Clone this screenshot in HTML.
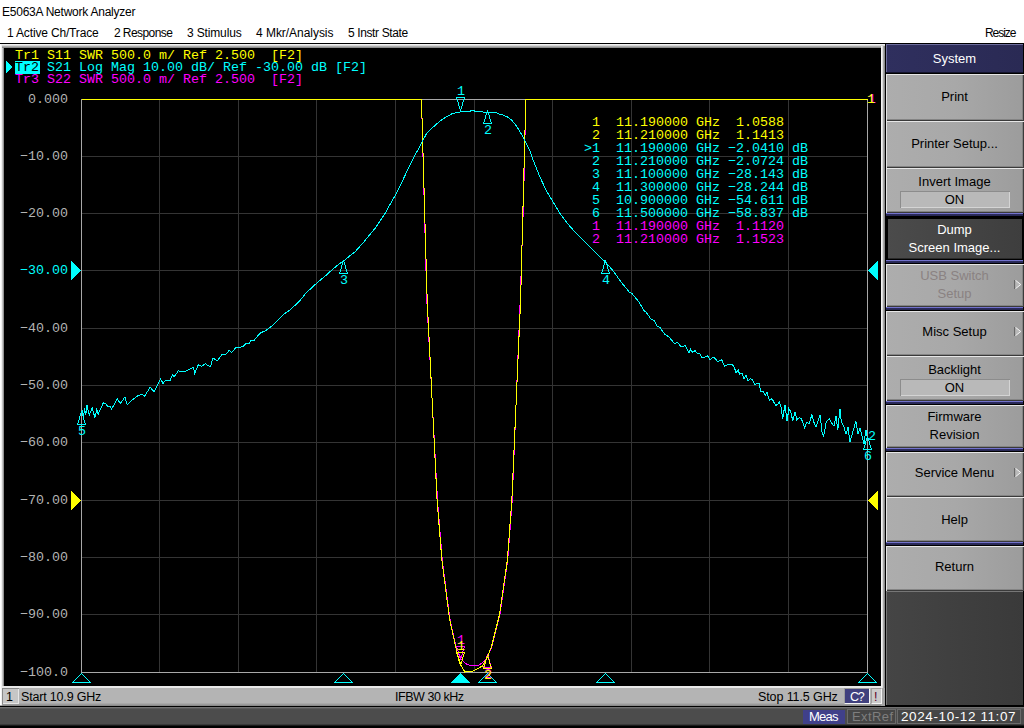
<!DOCTYPE html>
<html><head><meta charset="utf-8"><title>E5063A Network Analyzer</title>
<style>
html,body{margin:0;padding:0}
body{width:1024px;height:728px;position:relative;overflow:hidden;background:#fff;font-family:"Liberation Sans",sans-serif}
div{position:absolute;box-sizing:border-box}
.m{font-family:"Liberation Mono",monospace;font-size:13.33px;line-height:13px;height:13px;white-space:pre;letter-spacing:0}
.s{left:886px;width:137px;text-align:center;font-size:13px;line-height:17px;height:17px;white-space:nowrap}
.t{font-size:12px;line-height:14px;white-space:nowrap;color:#000}
.b{font-size:13px;line-height:15px;white-space:nowrap}
.c{font-size:12.5px;line-height:15px;white-space:nowrap}
</style></head><body>
<div class="t" style="left:2px;top:5px;letter-spacing:-0.24px">E5063A Network Analyzer</div>
<div class="t" style="left:7px;top:26px;letter-spacing:-0.16px">1 Active Ch/Trace</div>
<div class="t" style="left:114px;top:26px;letter-spacing:-0.58px">2 Response</div>
<div class="t" style="left:187px;top:26px;letter-spacing:-0.15px">3 Stimulus</div>
<div class="t" style="left:256px;top:26px;letter-spacing:-0.04px">4 Mkr/Analysis</div>
<div class="t" style="left:348px;top:26px;letter-spacing:-0.38px">5 Instr State</div>
<div class="t" style="left:985px;top:26px;letter-spacing:-1.05px">Resize</div>
<div style="left:0;top:43px;width:1024px;height:1px;background:#000"></div>
<!-- plot frame -->
<div style="left:0;top:44px;width:885px;height:662px;background:#a8a8a8"></div>
<div style="left:0;top:44px;width:4px;height:661px;background:linear-gradient(90deg,#ffffff 0px,#ffffff 1px,#f0f0f0 1px,#f0f0f0 2px,#c4c4c4 2px,#c4c4c4 3px,#929292 3px,#929292 4px)"></div>
<div style="left:2px;top:44px;width:883px;height:4px;background:linear-gradient(180deg,#f0f0f0 0px,#f0f0f0 1px,#d6d6d6 1px,#d6d6d6 2px,#adadad 2px,#adadad 3px,#8e8e8e 3px,#8e8e8e 4px)"></div>
<div style="left:881px;top:46px;width:4px;height:642px;background:linear-gradient(90deg,#f4f4f4 0px,#f4f4f4 1px,#dcdcdc 1px,#dcdcdc 2px,#a8a8a8 2px,#a8a8a8 3px,#8c8c8c 3px,#8c8c8c 4px)"></div>
<div style="left:881px;top:688px;width:4px;height:18px;background:#a4a4a4"></div>
<div style="left:4px;top:48px;width:877px;height:638px;background:#000"></div>
<!-- channel status bar -->
<div style="left:2px;top:686px;width:879px;height:20px;background:linear-gradient(180deg,#b4b4b4 0,#b4b4b4 17px,#a8a8a8 17px,#a8a8a8 18px,#9a9a9a 18px,#9a9a9a 19px,#8a8a8a 19px)"></div>
<div style="left:2px;top:686px;width:879px;height:2px;background:#e8e8e8"></div>
<div style="left:2px;top:688px;width:17px;height:16px;background:#c6c6c6;box-shadow:inset 1px 1px 0 #8a8a8a, inset -1px -1px 0 #e6e6e6"></div>
<div class="c" style="left:6px;top:690px;color:#000">1</div>
<div class="c" style="left:21px;top:690px;color:#000;letter-spacing:-0.18px">Start 10.9 GHz</div>
<div class="c" style="left:395px;top:690px;color:#000;letter-spacing:-0.45px">IFBW 30 kHz</div>
<div class="c" style="left:758px;top:690px;color:#000;letter-spacing:-0.1px">Stop 11.5 GHz</div>
<div style="left:844px;top:688px;width:26px;height:16px;background:#40407e;border:1px solid;border-color:#9c9c9c #f4f4f4 #f4f4f4 #9c9c9c"></div>
<div class="c" style="left:850px;top:690px;color:#fff;letter-spacing:-1.2px">C?</div>
<div style="left:871px;top:688px;width:11px;height:16px;background:#cacaca;border:1px solid;border-color:#9c9c9c #f4f4f4 #f4f4f4 #9c9c9c"></div>
<div class="c" style="left:874px;top:690px;color:#5a0028">!</div>
<!-- bottom status -->
<div style="left:0;top:706px;width:1024px;height:22px;background:#000"></div>
<div style="left:885px;top:705px;width:139px;height:1px;background:#000"></div>
<div style="left:0;top:707px;width:1024px;height:19px;background:linear-gradient(180deg,#727272 0,#727272 1px,#5a5a5a 1px,#5a5a5a 2px,#4c4c4c 2px,#4c4c4c 17px,#3a3a3a 17px,#3a3a3a 18px,#1a1a1a 18px)"></div>
<div style="left:803px;top:710px;width:42px;height:14px;background:#40408a"></div>
<div class="b" style="left:809px;top:709px;color:#fff;letter-spacing:-0.8px">Meas</div>
<div style="left:847px;top:709px;width:49px;height:15px;background:#464646;border:1px solid #6a6a6a"></div>
<div class="b" style="left:852px;top:709px;color:#7e7e7e;letter-spacing:0.4px">ExtRef</div>
<div style="left:897px;top:709px;width:124px;height:15px;background:#464646;border:1px solid #6a6a6a"></div>
<div class="b" style="left:901px;top:709px;color:#fff;font-size:13.5px;letter-spacing:0.6px">2024-10-12 11:07</div>
<svg id="plot" width="1024" height="728" viewBox="0 0 1024 728" shape-rendering="crispEdges" style="position:absolute;left:0;top:0">
<rect x="159" y="99" width="1" height="573" fill="#343434"/>
<rect x="238" y="99" width="1" height="573" fill="#343434"/>
<rect x="316" y="99" width="1" height="573" fill="#343434"/>
<rect x="395" y="99" width="1" height="573" fill="#343434"/>
<rect x="474" y="99" width="1" height="573" fill="#343434"/>
<rect x="552" y="99" width="1" height="573" fill="#343434"/>
<rect x="631" y="99" width="1" height="573" fill="#343434"/>
<rect x="709" y="99" width="1" height="573" fill="#343434"/>
<rect x="788" y="99" width="1" height="573" fill="#343434"/>
<rect x="81" y="156" width="786" height="1" fill="#343434"/>
<rect x="81" y="213" width="786" height="1" fill="#343434"/>
<rect x="81" y="270" width="786" height="1" fill="#343434"/>
<rect x="81" y="328" width="786" height="1" fill="#343434"/>
<rect x="81" y="385" width="786" height="1" fill="#343434"/>
<rect x="81" y="442" width="786" height="1" fill="#343434"/>
<rect x="81" y="500" width="786" height="1" fill="#343434"/>
<rect x="81" y="557" width="786" height="1" fill="#343434"/>
<rect x="81" y="614" width="786" height="1" fill="#343434"/>
<rect x="81" y="99" width="787" height="1" fill="#a8a8a8"/>
<rect x="81" y="672" width="787" height="1" fill="#a8a8a8"/>
<rect x="81" y="99" width="1" height="574" fill="#a8a8a8"/>
<rect x="867" y="99" width="1" height="574" fill="#a8a8a8"/>
<polyline points="81.5,99.5 421.5,99.5 426.8,300.5 437.5,500.5 442.3,560.5 450.0,619.5 455.9,646.2 461.4,659.7 466.5,664.0 471.9,665.9 479.1,665.0 486.2,659.6 488.1,655.0 492.0,646.2 500.0,614.1 507.7,560.5 512.2,500.5 520.2,300.5 523.6,199.5 525.8,99.5 867.5,99.5" fill="none" stroke="#ff00ff" stroke-width="1"/>
<polyline points="81.5,99.5 421.5,99.5 427.2,300.5 437.1,500.5 441.9,560.5 449.6,619.5 457.6,655.1 461.4,665.8 464.8,672.0 473.7,670.9 482.6,665.9 487.5,656.9 491.6,646.2 499.6,614.1 507.3,560.5 511.8,500.5 520.6,300.5 523.2,199.5 525.8,99.5 867.5,99.5" fill="none" stroke="#ffff00" stroke-width="1"/>
<polyline points="81.5,412.5 82.2,410.2 83.4,417.7 84.6,408.3 85.7,415.3 86.9,404.8 89.2,415.3 92.1,407.8 94.9,417.7 96.7,409.5 98.2,414.2 103.3,402.9 105.7,403.6 108.0,407.1 109.9,406.0 111.5,409.0 117.4,398.9 120.2,403.6 124.9,397.1 127.2,404.8 131.9,400.1 138.5,395.4 142.0,394.2 144.3,396.6 150.2,387.2 154.2,391.9 160.7,379.0 163.1,383.7 165.4,380.2 170.1,380.2 172.4,375.0 174.3,376.7 178.3,370.8 183.0,372.0 187.7,370.3 193.5,367.3 194.7,373.6 198.2,364.9 201.7,366.1 205.3,363.8 210.4,366.8 213.0,357.9 217.0,361.0 221.7,354.9 225.2,354.9 229.4,350.2 231.7,352.5 235.7,347.8 242.8,346.7 246.3,343.4 249.1,343.9 251.0,340.3 253.8,340.8 259.9,333.3 266.2,330.3 272.0,325.8 283.8,314.1 289.6,310.3 299.0,301.7 305.4,293.8 308.2,291.0 317.1,282.8 325.4,275.9 332.9,269.0 339.8,263.5 343.9,260.8 350.5,255.3 354.5,252.4 363.9,241.9 375.5,227.8 384.9,213.8 390.7,203.3 396.1,194.0 402.4,181.1 408.3,168.3 414.1,156.6 418.8,148.4 422.3,141.4 426.4,133.9 432.2,128.0 439.3,121.6 445.1,117.5 451.6,114.0 455.7,112.8 460.3,111.9 469.1,111.6 470.9,110.8 474.4,110.8 475.6,111.9 495.5,112.2 497.8,113.6 502.5,114.8 507.2,116.9 511.9,120.4 515.4,124.5 518.9,129.8 522.5,136.2 526.0,143.3 529.5,149.7 532.2,157.7 539.2,175.3 546.2,190.5 553.2,202.1 560.2,213.8 567.2,223.2 576.6,233.7 588.3,245.4 597.6,254.7 605.1,261.7 612.6,270.1 620.1,280.7 629.2,292.0 631.9,293.5 638.3,301.1 644.3,310.9 645.8,311.7 651.1,319.2 654.1,320.3 657.1,326.0 660.2,327.8 664.7,334.3 668.5,336.6 674.5,343.4 677.9,342.6 681.0,346.8 683.5,346.6 685.1,345.1 689.0,353.0 690.6,349.0 692.7,352.5 695.0,350.5 697.1,353.0 699.2,353.0 702.0,357.7 706.3,356.7 707.8,355.8 710.1,359.9 712.5,357.4 714.4,357.7 718.1,362.0 719.9,360.2 721.8,359.9 724.3,366.1 727.4,364.9 732.3,364.9 734.2,367.0 736.0,372.5 738.2,370.1 739.7,374.4 741.9,373.1 744.0,378.7 745.9,375.0 748.1,380.9 750.6,378.7 752.7,380.2 755.2,384.9 757.0,383.4 758.9,383.0 760.7,391.7 763.2,391.1 765.1,395.4 766.9,392.1 769.4,400.7 771.9,398.5 775.6,405.3 777.4,404.7 779.3,401.9 780.8,405.9 782.7,419.2 784.9,404.7 787.1,421.4 788.8,408.7 790.6,411.3 792.8,421.0 795.0,411.8 796.8,419.7 799.0,417.9 801.2,418.3 804.7,428.0 806.9,421.9 809.1,423.6 811.9,414.8 814.3,423.6 816.1,426.7 820.0,414.8 822.2,433.3 823.7,436.1 826.2,421.9 829.3,418.8 832.3,424.1 834.1,425.8 836.0,415.9 837.8,430.2 840.0,408.7 841.3,421.9 843.8,426.3 846.0,434.2 848.0,427.1 849.9,442.1 855.9,421.0 858.0,433.7 860.0,428.0 864.0,443.8 865.9,429.8 867.5,439.0" fill="none" stroke="#00ffff" stroke-width="1"/>
<polygon points="6,61 6,73.5 12.3,67.2" fill="#00ffff" />
<polygon points="71,261 71,280 81,270.5" fill="#00ffff" />
<polygon points="878,261 878,280 868,270.5" fill="#00ffff" />
<polygon points="71,491 71,510 81,500.5" fill="#ffff00" />
<polygon points="878,491 878,510 868,500.5" fill="#ffff00" />
<polygon points="81.5,673.5 72.5,682.5 90.5,682.5" fill="none" stroke="#00ffff" stroke-width="1"/>
<polygon points="343.5,673.5 334.5,682.5 352.5,682.5" fill="none" stroke="#00ffff" stroke-width="1"/>
<polygon points="605.5,673.5 596.5,682.5 614.5,682.5" fill="none" stroke="#00ffff" stroke-width="1"/>
<polygon points="867.5,673.5 858.5,682.5 876.5,682.5" fill="none" stroke="#00ffff" stroke-width="1"/>
<polygon points="487.5,673.5 478.5,682.5 496.5,682.5" fill="none" stroke="#00ffff" stroke-width="1"/>
<polygon points="460.5,673.5 451.5,682.5 469.5,682.5" fill="#00ffff" stroke="#00ffff" stroke-width="1"/>
<rect x="460" y="109" width="1" height="2" fill="#00ffff"/><rect x="459" y="106" width="1" height="3" fill="#00ffff"/><rect x="461" y="106" width="1" height="3" fill="#00ffff"/><rect x="458" y="102" width="1" height="4" fill="#00ffff"/><rect x="462" y="102" width="1" height="4" fill="#00ffff"/><rect x="457" y="99" width="1" height="3" fill="#00ffff"/><rect x="463" y="99" width="1" height="3" fill="#00ffff"/><rect x="456" y="98" width="1" height="1" fill="#00ffff"/><rect x="464" y="98" width="1" height="1" fill="#00ffff"/><rect x="456" y="97" width="9" height="1" fill="#00ffff"/>
<rect x="487" y="110" width="1" height="2" fill="#00ffff"/><rect x="486" y="112" width="1" height="3" fill="#00ffff"/><rect x="488" y="112" width="1" height="3" fill="#00ffff"/><rect x="485" y="115" width="1" height="4" fill="#00ffff"/><rect x="489" y="115" width="1" height="4" fill="#00ffff"/><rect x="484" y="119" width="1" height="3" fill="#00ffff"/><rect x="490" y="119" width="1" height="3" fill="#00ffff"/><rect x="483" y="122" width="1" height="1" fill="#00ffff"/><rect x="491" y="122" width="1" height="1" fill="#00ffff"/><rect x="483" y="123" width="9" height="1" fill="#00ffff"/>
<rect x="343" y="260" width="1" height="2" fill="#00ffff"/><rect x="342" y="262" width="1" height="3" fill="#00ffff"/><rect x="344" y="262" width="1" height="3" fill="#00ffff"/><rect x="341" y="265" width="1" height="4" fill="#00ffff"/><rect x="345" y="265" width="1" height="4" fill="#00ffff"/><rect x="340" y="269" width="1" height="3" fill="#00ffff"/><rect x="346" y="269" width="1" height="3" fill="#00ffff"/><rect x="339" y="272" width="1" height="1" fill="#00ffff"/><rect x="347" y="272" width="1" height="1" fill="#00ffff"/><rect x="339" y="273" width="9" height="1" fill="#00ffff"/>
<rect x="605" y="260" width="1" height="2" fill="#00ffff"/><rect x="604" y="262" width="1" height="3" fill="#00ffff"/><rect x="606" y="262" width="1" height="3" fill="#00ffff"/><rect x="603" y="265" width="1" height="4" fill="#00ffff"/><rect x="607" y="265" width="1" height="4" fill="#00ffff"/><rect x="602" y="269" width="1" height="3" fill="#00ffff"/><rect x="608" y="269" width="1" height="3" fill="#00ffff"/><rect x="601" y="272" width="1" height="1" fill="#00ffff"/><rect x="609" y="272" width="1" height="1" fill="#00ffff"/><rect x="601" y="273" width="9" height="1" fill="#00ffff"/>
<rect x="81" y="411" width="1" height="2" fill="#00ffff"/><rect x="80" y="413" width="1" height="3" fill="#00ffff"/><rect x="82" y="413" width="1" height="3" fill="#00ffff"/><rect x="79" y="416" width="1" height="4" fill="#00ffff"/><rect x="83" y="416" width="1" height="4" fill="#00ffff"/><rect x="78" y="420" width="1" height="3" fill="#00ffff"/><rect x="84" y="420" width="1" height="3" fill="#00ffff"/><rect x="77" y="423" width="1" height="1" fill="#00ffff"/><rect x="85" y="423" width="1" height="1" fill="#00ffff"/><rect x="77" y="424" width="9" height="1" fill="#00ffff"/>
<rect x="867" y="436" width="1" height="2" fill="#00ffff"/><rect x="866" y="438" width="1" height="3" fill="#00ffff"/><rect x="868" y="438" width="1" height="3" fill="#00ffff"/><rect x="865" y="441" width="1" height="4" fill="#00ffff"/><rect x="869" y="441" width="1" height="4" fill="#00ffff"/><rect x="864" y="445" width="1" height="3" fill="#00ffff"/><rect x="870" y="445" width="1" height="3" fill="#00ffff"/><rect x="863" y="448" width="1" height="1" fill="#00ffff"/><rect x="871" y="448" width="1" height="1" fill="#00ffff"/><rect x="863" y="449" width="9" height="1" fill="#00ffff"/>
<rect x="460" y="658" width="1" height="2" fill="#ff00ff"/><rect x="459" y="655" width="1" height="3" fill="#ff00ff"/><rect x="461" y="655" width="1" height="3" fill="#ff00ff"/><rect x="458" y="651" width="1" height="4" fill="#ff00ff"/><rect x="462" y="651" width="1" height="4" fill="#ff00ff"/><rect x="457" y="648" width="1" height="3" fill="#ff00ff"/><rect x="463" y="648" width="1" height="3" fill="#ff00ff"/><rect x="456" y="647" width="1" height="1" fill="#ff00ff"/><rect x="464" y="647" width="1" height="1" fill="#ff00ff"/><rect x="456" y="646" width="9" height="1" fill="#ff00ff"/>
<rect x="487" y="654" width="1" height="2" fill="#ff00ff"/><rect x="486" y="656" width="1" height="3" fill="#ff00ff"/><rect x="488" y="656" width="1" height="3" fill="#ff00ff"/><rect x="485" y="659" width="1" height="4" fill="#ff00ff"/><rect x="489" y="659" width="1" height="4" fill="#ff00ff"/><rect x="484" y="663" width="1" height="3" fill="#ff00ff"/><rect x="490" y="663" width="1" height="3" fill="#ff00ff"/><rect x="483" y="666" width="1" height="1" fill="#ff00ff"/><rect x="491" y="666" width="1" height="1" fill="#ff00ff"/><rect x="483" y="667" width="9" height="1" fill="#ff00ff"/>
<rect x="460" y="664" width="1" height="2" fill="#ffff00"/><rect x="459" y="661" width="1" height="3" fill="#ffff00"/><rect x="461" y="661" width="1" height="3" fill="#ffff00"/><rect x="458" y="657" width="1" height="4" fill="#ffff00"/><rect x="462" y="657" width="1" height="4" fill="#ffff00"/><rect x="457" y="654" width="1" height="3" fill="#ffff00"/><rect x="463" y="654" width="1" height="3" fill="#ffff00"/><rect x="456" y="653" width="1" height="1" fill="#ffff00"/><rect x="464" y="653" width="1" height="1" fill="#ffff00"/><rect x="456" y="652" width="9" height="1" fill="#ffff00"/>
<rect x="487" y="655" width="1" height="2" fill="#ffff00"/><rect x="486" y="657" width="1" height="3" fill="#ffff00"/><rect x="488" y="657" width="1" height="3" fill="#ffff00"/><rect x="485" y="660" width="1" height="4" fill="#ffff00"/><rect x="489" y="660" width="1" height="4" fill="#ffff00"/><rect x="484" y="664" width="1" height="3" fill="#ffff00"/><rect x="490" y="664" width="1" height="3" fill="#ffff00"/><rect x="483" y="667" width="1" height="1" fill="#ffff00"/><rect x="491" y="667" width="1" height="1" fill="#ffff00"/><rect x="483" y="668" width="9" height="1" fill="#ffff00"/>
</svg>
<div style="left:15px;top:61px;width:25px;height:13px;background:#00ffff"></div>
<div class="m" style="left:15px;top:49px;color:#ffff00;">Tr1 S11 SWR 500.0 m/ Ref 2.500  [F2]</div>
<div class="m" style="left:15px;top:61px;color:#00ffff;"><span style="color:#000">Tr2</span> S21 Log Mag 10.00 dB/ Ref -30.00 dB [F2]</div>
<div class="m" style="left:15px;top:73px;color:#ff00ff;">Tr3 S22 SWR 500.0 m/ Ref 2.500  [F2]</div>
<div class="m" style="left:4px;width:64px;text-align:right;top:93px;color:#b4b4b4">0.000</div>
<div class="m" style="left:4px;width:64px;text-align:right;top:150px;color:#b4b4b4">−10.00</div>
<div class="m" style="left:4px;width:64px;text-align:right;top:207px;color:#b4b4b4">−20.00</div>
<div class="m" style="left:4px;width:64px;text-align:right;top:264px;color:#00ffff">−30.00</div>
<div class="m" style="left:4px;width:64px;text-align:right;top:322px;color:#b4b4b4">−40.00</div>
<div class="m" style="left:4px;width:64px;text-align:right;top:379px;color:#b4b4b4">−50.00</div>
<div class="m" style="left:4px;width:64px;text-align:right;top:436px;color:#b4b4b4">−60.00</div>
<div class="m" style="left:4px;width:64px;text-align:right;top:494px;color:#b4b4b4">−70.00</div>
<div class="m" style="left:4px;width:64px;text-align:right;top:551px;color:#b4b4b4">−80.00</div>
<div class="m" style="left:4px;width:64px;text-align:right;top:608px;color:#b4b4b4">−90.00</div>
<div class="m" style="left:4px;width:64px;text-align:right;top:666px;color:#b4b4b4">−100.0</div>
<div class="m" style="left:584px;top:116px;color:#ffff00;"> 1  11.190000 GHz  1.0588</div>
<div class="m" style="left:584px;top:129px;color:#ffff00;"> 2  11.210000 GHz  1.1413</div>
<div class="m" style="left:584px;top:142px;color:#00ffff;">&gt;1  11.190000 GHz −2.0410 dB</div>
<div class="m" style="left:584px;top:155px;color:#00ffff;"> 2  11.210000 GHz −2.0724 dB</div>
<div class="m" style="left:584px;top:168px;color:#00ffff;"> 3  11.100000 GHz −28.143 dB</div>
<div class="m" style="left:584px;top:181px;color:#00ffff;"> 4  11.300000 GHz −28.244 dB</div>
<div class="m" style="left:584px;top:194px;color:#00ffff;"> 5  10.900000 GHz −54.611 dB</div>
<div class="m" style="left:584px;top:207px;color:#00ffff;"> 6  11.500000 GHz −58.837 dB</div>
<div class="m" style="left:584px;top:220px;color:#ff00ff;"> 1  11.190000 GHz  1.1120</div>
<div class="m" style="left:584px;top:233px;color:#ff00ff;"> 2  11.210000 GHz  1.1523</div>
<div class="m" style="left:457px;top:85px;width:8px;color:#00ffff">1</div>
<div class="m" style="left:484px;top:124px;width:8px;color:#00ffff">2</div>
<div class="m" style="left:340px;top:274px;width:8px;color:#00ffff">3</div>
<div class="m" style="left:602px;top:274px;width:8px;color:#00ffff">4</div>
<div class="m" style="left:78px;top:425px;width:8px;color:#00ffff">5</div>
<div class="m" style="left:864px;top:450px;width:8px;color:#00ffff">6</div>
<div class="m" style="left:868px;top:430px;width:8px;color:#00ffff">2</div>
<div class="m" style="left:868px;top:93px;width:8px;color:#ff00ff">1</div>
<div class="m" style="left:867px;top:93px;width:8px;color:#ffff00">1</div>
<div class="m" style="left:457px;top:634px;width:8px;color:#ff00ff">1</div>
<div class="m" style="left:457px;top:640px;width:8px;color:#ffff00">1</div>
<div class="m" style="left:484px;top:668px;width:8px;color:#ff00ff">2</div>
<div class="m" style="left:484px;top:669px;width:8px;color:#ffff00">2</div>
<!-- side panel -->
<div style="left:885px;top:44px;width:139px;height:661px;background:#000;"></div>
<div style="left:886px;top:44px;width:137px;height:29px;background:linear-gradient(90deg,#2f2f5e,#2a2a54);box-shadow:inset 0 -1px 0 #14142c, inset 1px 1px 0 #6c6c9c;"></div>
<div class="s" style="top:50px;color:#fff">System</div>
<div style="left:886px;top:74px;width:138px;height:47px;background:linear-gradient(90deg,#adadad,#a8a8a8 50%,#9c9c9c);box-shadow:inset 1px 1px 0 #e6e6e6, inset -1px -1px 0 #3a3a3a, inset -2px -2px 0 #848484;"></div>
<div class="s" style="top:88px;color:#000">Print</div>
<div style="left:886px;top:121px;width:138px;height:47px;background:linear-gradient(90deg,#adadad,#a8a8a8 50%,#9c9c9c);box-shadow:inset 1px 1px 0 #e6e6e6, inset -1px -1px 0 #3a3a3a, inset -2px -2px 0 #848484;"></div>
<div class="s" style="top:135px;color:#000">Printer Setup...</div>
<div style="left:886px;top:168px;width:138px;height:45px;background:linear-gradient(90deg,#adadad,#a8a8a8 50%,#9c9c9c);box-shadow:inset 1px 1px 0 #e6e6e6, inset -1px -1px 0 #3a3a3a, inset -2px -2px 0 #848484;"></div>
<div class="s" style="top:173px;color:#000">Invert Image</div>
<div style="left:900px;top:191px;width:110px;height:17px;background:#b9b9b9;box-shadow:inset 1px 1px 0 #8c8c8c, inset -1px -1px 0 #d4d4d4;"></div>
<div class="s" style="top:191px;color:#000">ON</div>
<div style="left:888px;top:219px;width:134px;height:40px;background:linear-gradient(90deg,#4b4b4b,#3e3e3e);box-shadow:inset 0 -1px 0 #2a2a2a;"></div>
<div class="s" style="top:221px;color:#fff">Dump</div>
<div class="s" style="top:239px;color:#fff">Screen Image...</div>
<div style="left:886px;top:264px;width:138px;height:43px;background:linear-gradient(90deg,#adadad,#a8a8a8 50%,#9c9c9c);box-shadow:inset 1px 1px 0 #e6e6e6, inset -1px -1px 0 #3a3a3a, inset -2px -2px 0 #848484;"></div>
<div class="s" style="top:267px;color:#8a8282">USB Switch</div>
<div class="s" style="top:285px;color:#8a8282">Setup</div>
<svg style="position:absolute;left:1013px;top:280px" width="9" height="9" viewBox="0 0 9 9"><path d="M1.5 0 V9" stroke="#686868" fill="none"/><path d="M2.5 0.3 L7.8 4.5 L2.5 8.7 Z" stroke="none" fill="#b8b8b8"/><path d="M2.5 0.3 L7.8 4.5 L2.5 8.7" stroke="#f4f4f4" stroke-width="1" fill="none"/></svg>
<div style="left:886px;top:311px;width:138px;height:45px;background:linear-gradient(90deg,#adadad,#a8a8a8 50%,#9c9c9c);box-shadow:inset 1px 1px 0 #e6e6e6, inset -1px -1px 0 #3a3a3a, inset -2px -2px 0 #848484;"></div>
<div class="s" style="top:323px;color:#000">Misc Setup</div>
<svg style="position:absolute;left:1013px;top:327px" width="9" height="9" viewBox="0 0 9 9"><path d="M1.5 0 V9" stroke="#686868" fill="none"/><path d="M2.5 0.3 L7.8 4.5 L2.5 8.7 Z" stroke="none" fill="#b8b8b8"/><path d="M2.5 0.3 L7.8 4.5 L2.5 8.7" stroke="#f4f4f4" stroke-width="1" fill="none"/></svg>
<div style="left:886px;top:356px;width:138px;height:45px;background:linear-gradient(90deg,#adadad,#a8a8a8 50%,#9c9c9c);box-shadow:inset 1px 1px 0 #e6e6e6, inset -1px -1px 0 #3a3a3a, inset -2px -2px 0 #848484;"></div>
<div class="s" style="top:361px;color:#000">Backlight</div>
<div style="left:900px;top:379px;width:110px;height:17px;background:#b9b9b9;box-shadow:inset 1px 1px 0 #8c8c8c, inset -1px -1px 0 #d4d4d4;"></div>
<div class="s" style="top:379px;color:#000">ON</div>
<div style="left:886px;top:405px;width:138px;height:43px;background:linear-gradient(90deg,#adadad,#a8a8a8 50%,#9c9c9c);box-shadow:inset 1px 1px 0 #e6e6e6, inset -1px -1px 0 #3a3a3a, inset -2px -2px 0 #848484;"></div>
<div class="s" style="top:408px;color:#000">Firmware</div>
<div class="s" style="top:426px;color:#000">Revision</div>
<div style="left:886px;top:452px;width:138px;height:45px;background:linear-gradient(90deg,#adadad,#a8a8a8 50%,#9c9c9c);box-shadow:inset 1px 1px 0 #e6e6e6, inset -1px -1px 0 #3a3a3a, inset -2px -2px 0 #848484;"></div>
<div class="s" style="top:464px;color:#000">Service Menu</div>
<svg style="position:absolute;left:1013px;top:468px" width="9" height="9" viewBox="0 0 9 9"><path d="M1.5 0 V9" stroke="#686868" fill="none"/><path d="M2.5 0.3 L7.8 4.5 L2.5 8.7 Z" stroke="none" fill="#b8b8b8"/><path d="M2.5 0.3 L7.8 4.5 L2.5 8.7" stroke="#f4f4f4" stroke-width="1" fill="none"/></svg>
<div style="left:886px;top:497px;width:138px;height:45px;background:linear-gradient(90deg,#adadad,#a8a8a8 50%,#9c9c9c);box-shadow:inset 1px 1px 0 #e6e6e6, inset -1px -1px 0 #3a3a3a, inset -2px -2px 0 #848484;"></div>
<div class="s" style="top:511px;color:#000">Help</div>
<div style="left:886px;top:546px;width:138px;height:45px;background:linear-gradient(90deg,#adadad,#a8a8a8 50%,#9c9c9c);box-shadow:inset 1px 1px 0 #e6e6e6, inset -1px -1px 0 #3a3a3a, inset -2px -2px 0 #848484;"></div>
<div class="s" style="top:558px;color:#000">Return</div>
<div style="left:886px;top:213px;width:137px;height:3px;background:linear-gradient(180deg,#7272cc 0,#7272cc 1px,#2c2c5e 1px,#262650 3px);"></div>
<div style="left:886px;top:260px;width:137px;height:3px;background:linear-gradient(180deg,#7272cc 0,#7272cc 1px,#2c2c5e 1px,#262650 3px);"></div>
<div style="left:886px;top:307px;width:137px;height:3px;background:linear-gradient(180deg,#7272cc 0,#7272cc 1px,#2c2c5e 1px,#262650 3px);"></div>
<div style="left:886px;top:401px;width:137px;height:3px;background:linear-gradient(180deg,#7272cc 0,#7272cc 1px,#2c2c5e 1px,#262650 3px);"></div>
<div style="left:886px;top:448px;width:137px;height:3px;background:linear-gradient(180deg,#7272cc 0,#7272cc 1px,#2c2c5e 1px,#262650 3px);"></div>
<div style="left:886px;top:542px;width:137px;height:3px;background:linear-gradient(180deg,#7272cc 0,#7272cc 1px,#2c2c5e 1px,#262650 3px);"></div>
<div style="left:886px;top:591px;width:137px;height:114px;background:linear-gradient(90deg,#454545,#3a3a3a);box-shadow:inset 1px 1px 0 #767676;"></div>
</body></html>
